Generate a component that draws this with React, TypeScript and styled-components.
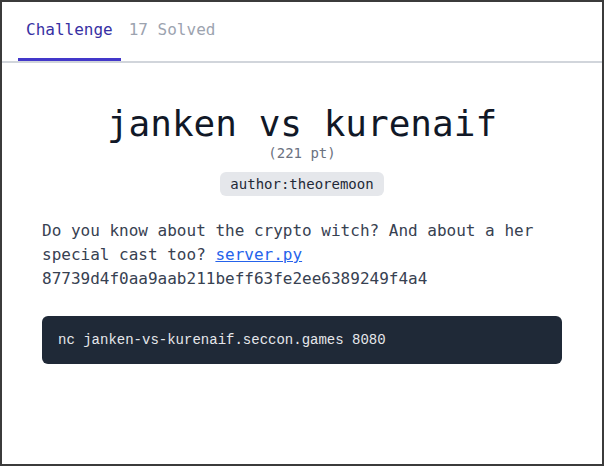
import React from "react";
import styled, { createGlobalStyle } from "styled-components";

const Global = createGlobalStyle`
  html, body { margin: 0; padding: 0; background: #ffffff; }
  * { box-sizing: border-box; }
`;

const Frame = styled.div`
  width: 604px;
  height: 466px;
  border: 2px solid #3b3b3b;
  background: #ffffff;
  font-family: "DejaVu Sans Mono", monospace;
  display: flex;
  flex-direction: column;
  overflow: hidden;
`;

const TabBar = styled.nav`
  display: flex;
  padding-left: 16px;
  border-bottom: 2px solid #d1d5db;
`;

const Tab = styled.div<{ $active?: boolean }>`
  padding: 16px 8px 16px;
  font-size: 16px;
  line-height: 24px;
  color: ${(p) => (p.$active ? "#3730a3" : "#9ca3af")};
  border-bottom: 3px solid ${(p) => (p.$active ? "#4338ca" : "transparent")};
`;

const Content = styled.main`
  padding: 41px 40px 0;
  display: flex;
  flex-direction: column;
`;

const Header = styled.header`
  display: flex;
  flex-direction: column;
  align-items: center;
`;

const Title = styled.h1`
  margin: 0;
  font-size: 36px;
  line-height: 40px;
  font-weight: 400;
  color: #111827;
`;

const Points = styled.div`
  font-size: 14px;
  line-height: 20px;
  color: #6b7280;
  margin-top: -1px;
`;

const Badge = styled.span`
  margin-top: 9px;
  padding: 0 10px;
  background: #e5e7eb;
  border-radius: 6px;
  font-size: 14px;
  line-height: 24px;
  color: #1f2937;
`;

const Description = styled.p`
  margin: 23px 0 0;
  font-size: 16px;
  line-height: 24px;
  color: #374151;
`;

const Link = styled.a`
  color: #2563eb;
  text-decoration: underline;
`;

const Code = styled.pre`
  margin: 25px 0 0;
  padding: 12px 16px;
  background: #1f2937;
  border-radius: 6px;
  font-family: "Liberation Mono", monospace;
  font-size: 14px;
  line-height: 24px;
  color: #e5e7eb;
`;

export default function App() {
  return (
    <>
      <Global />
      <Frame>
        <TabBar>
          <Tab $active>Challenge</Tab>
          <Tab>17 Solved</Tab>
        </TabBar>
        <Content>
          <Header>
            <Title>janken vs kurenaif</Title>
            <Points>(221 pt)</Points>
            <Badge>author:theoremoon</Badge>
          </Header>
          <Description>
            Do you know about the crypto witch? And about a her special cast too?{" "}
            <Link href="#">server.py</Link>
            <br />
            87739d4f0aa9aab211beff63fe2ee6389249f4a4
          </Description>
          <Code>nc janken-vs-kurenaif.seccon.games 8080</Code>
        </Content>
      </Frame>
    </>
  );
}
